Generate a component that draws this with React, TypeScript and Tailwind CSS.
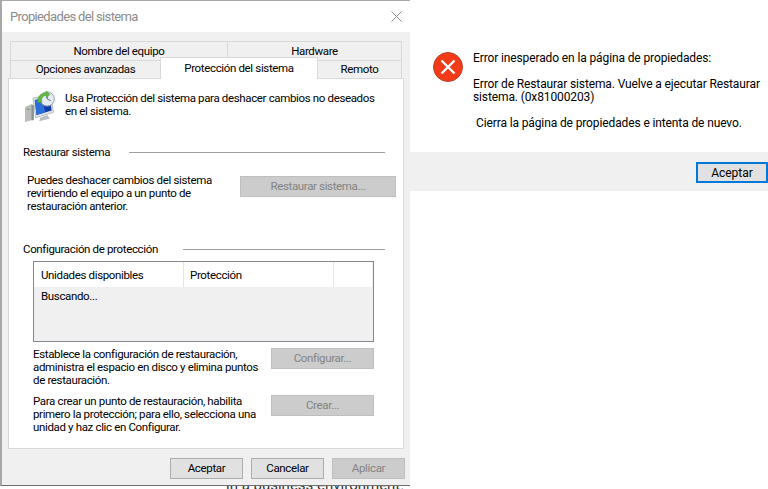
const font = "font-['Roboto','Liberation_Sans',sans-serif]";

function RestoreIcon() {
  return (
    <svg width="34" height="32" viewBox="0 0 38 36" className="shrink-0">
      <path d="M1 18 L8 15 L8 33 L1 35 Z" fill="#b9bcb9" />
      <path d="M8 15 L11 16 L11 33 L8 33 Z" fill="#8d918e" />
      <rect x="3" y="20" width="3" height="1" fill="#5d9a4d" />
      <path d="M10 8 L30 4 L33 24 L13 30 Z" fill="#dfe5e8" stroke="#9aa3a8" strokeWidth="0.7" />
      <path d="M12 10 L29 7 L31 22 L14 27 Z" fill="#0f3aa8" />
      <path d="M12 10 L20 9 L24 24 L14 27 Z" fill="#2a6fd8" />
      <path d="M18 30 L26 27 L29 31 L17 34 Z" fill="#b8bdbf" />
      <circle cx="26" cy="9" r="8" fill="#e6ecf2" stroke="#8b97a5" strokeWidth="1" />
      <path d="M26 4 V9 L30 11" fill="none" stroke="#59687a" strokeWidth="1" />
      <path d="M15 12 C15 5 19 1 25 1 L25 -1 L29 3 L25 7 L25 4 C21 4 19 7 20 12 Z" transform="translate(0 1)" fill="#63b845" stroke="#3f8f2e" strokeWidth="0.5" />
    </svg>
  );
}

function ErrorIcon() {
  return (
    <svg width="30" height="30" viewBox="0 0 30 30">
      <circle cx="15" cy="15" r="14.5" fill="#f33b19" stroke="#b5412b" strokeWidth="1" />
      <path d="M8.5 8.5 L21.5 21.5 M21.5 8.5 L8.5 21.5" stroke="#fff" strokeWidth="2.4" />
    </svg>
  );
}

function Section({ title, line }: { title: string; line: string }) {
  return (
    <div className="flex items-center justify-between h-[13px]">
      <span className="whitespace-nowrap">{title}</span>
      <div className={`${line} h-px bg-[#a0a0a0]`} />
    </div>
  );
}

function DisabledButton({ label, w }: { label: string; w: string }) {
  return (
    <div className={`${w} h-[21px] shrink-0 flex items-center justify-center bg-[#cccccc] border border-[#bfbfbf] text-[#838383]`}>
      {label}
    </div>
  );
}

function FooterButton({ label, disabled }: { label: string; disabled?: boolean }) {
  return (
    <div
      className={
        disabled
          ? "w-[73px] h-[21px] flex items-center justify-center bg-[#cccccc] border border-[#bfbfbf] text-[#838383]"
          : "w-[73px] h-[21px] flex items-center justify-center bg-[#e1e1e1] border border-[#adadad] text-black"
      }
    >
      {label}
    </div>
  );
}

function PropertiesWindow() {
  return (
    <div className="relative z-10 w-[410px] h-[486px] shrink-0 bg-[#f0f0f0] border-l-2 border-b border-t border-l-[#a8a8a8] border-b-[#6f6f6f] border-t-[#a8a8a8] flex flex-col text-[11.5px] tracking-[-0.35px]">
      <div className="h-[31px] shrink-0 bg-white flex items-center justify-between pl-[8px] pr-[8px] text-[13px] tracking-[-0.65px] text-[#8c8c8c]">
        <span>Propiedades del sistema</span>
        <svg width="11" height="11" viewBox="0 0 11 11">
          <path d="M0.5 0.5 L10.5 10.5 M10.5 0.5 L0.5 10.5" stroke="#8c8c8c" strokeWidth="1" />
        </svg>
      </div>

      <div className="pl-[6px] pt-[9px] flex flex-col flex-1">
        <div className="ml-[2px] w-[392px] flex h-[19px] text-center leading-[18px]">
          <div className="w-[218px] border-t border-l border-r border-[#d9d9d9]">Nombre del equipo</div>
          <div className="w-[174px] border-t border-r border-[#d9d9d9]">Hardware</div>
        </div>
        <div className="ml-[2px] w-[392px] flex h-[18px] text-center leading-[17px] relative z-10">
          <div className="w-[150px] h-[19px] border-t border-l border-[#d9d9d9]">Opciones avanzadas</div>
          <div className="w-[158px] h-[22px] -mt-[3px] bg-white border-t border-x border-[#d9d9d9] leading-[20px]">
            Protección del sistema
          </div>
          <div className="w-[84px] h-[19px] border-t border-r border-[#d9d9d9]">Remoto</div>
        </div>

        <div className="w-[396px] h-[371px] bg-white border border-[#d9d9d9] flex flex-col pt-[12px]">
          <div className="flex pl-[15px] gap-[7px] leading-[13px] h-[34px]">
            <RestoreIcon />
            <p className="w-[320px] pt-[1px]">Usa Protección del sistema para deshacer cambios no deseados en el sistema.</p>
          </div>

          <div className="mt-[21px] ml-[14px] mr-[18px]">
            <Section title="Restaurar sistema" line="w-[256px]" />
          </div>
          <div className="mt-[17px] ml-[18px] mr-[7px] flex justify-between leading-[13px]">
            <p className="w-[190px] -mt-[2px]">Puedes deshacer cambios del sistema revirtiendo el equipo a un punto de restauración anterior.</p>
            <DisabledButton label="Restaurar sistema..." w="w-[156px]" />
          </div>

          <div className="mt-[30px] ml-[14px] mr-[18px]">
            <Section title="Configuración de protección" line="w-[202px]" />
          </div>

          <div className="mt-[5px] ml-[24px] w-[341px] h-[81px] border border-[#828790] bg-[#f0f0f0] flex flex-col">
            <div className="flex h-[25px] bg-white mr-[1px] leading-[27px]">
              <div className="w-[150px] pl-[7px] border-r border-[#e5e5e5]">Unidades disponibles</div>
              <div className="w-[150px] pl-[6px] border-r border-[#e5e5e5]">Protección</div>
            </div>
            <div className="pl-[7px] pt-[1px]">Buscando...</div>
          </div>

          <div className="mt-[6px] ml-[24px] w-[341px] flex justify-between leading-[13px]">
            <p className="w-[232px]">Establece la configuración de restauración, administra el espacio en disco y elimina puntos de restauración.</p>
            <DisabledButton label="Configurar..." w="w-[103px]" />
          </div>
          <div className="mt-[8px] ml-[24px] w-[341px] flex justify-between leading-[13px]">
            <p className="w-[232px]">Para crear un punto de restauración, habilita primero la protección; para ello, selecciona una unidad y haz clic en Configurar.</p>
            <DisabledButton label="Crear..." w="w-[103px]" />
          </div>
        </div>

        <div className="mt-[9px] ml-[162px] flex gap-[8px]">
          <FooterButton label="Aceptar" />
          <FooterButton label="Cancelar" />
          <FooterButton label="Aplicar" disabled />
        </div>
      </div>
    </div>
  );
}

function ErrorDialog() {
  return (
    <div className="flex-1 min-w-0 h-[191px] flex flex-col bg-white">
      <div className="h-[152px] flex pl-[23px] pt-[52px] gap-[10px] tracking-[-0.12px] leading-[13px]">
        <div className="shrink-0"><ErrorIcon /></div>
        <div className="w-[290px]">
          <p>Error inesperado en la página de propiedades:</p>
          <p className="mt-[13px]">Error de Restaurar sistema. Vuelve a ejecutar Restaurar sistema. (0x81000203)</p>
          <p className="mt-[13px] ml-[3px]">Cierra la página de propiedades e intenta de nuevo.</p>
        </div>
      </div>
      <div className="h-[39px] bg-[#f0f0f0] flex justify-end items-start pt-[10px]">
        <div className="w-[72px] h-[21px] flex items-center justify-center bg-[#e1e1e1] border-2 border-[#0078d7]">
          Aceptar
        </div>
      </div>
    </div>
  );
}

export default function App() {
  return (
    <div className={`${font} relative w-[768px] h-[489px] overflow-hidden bg-white text-[12px] text-black flex items-start`}>
      <PropertiesWindow />
      <ErrorDialog />
      <div className="absolute left-[226px] top-[475px] text-[15px] leading-[20px] text-[#333]">in a business environment.</div>
    </div>
  );
}
